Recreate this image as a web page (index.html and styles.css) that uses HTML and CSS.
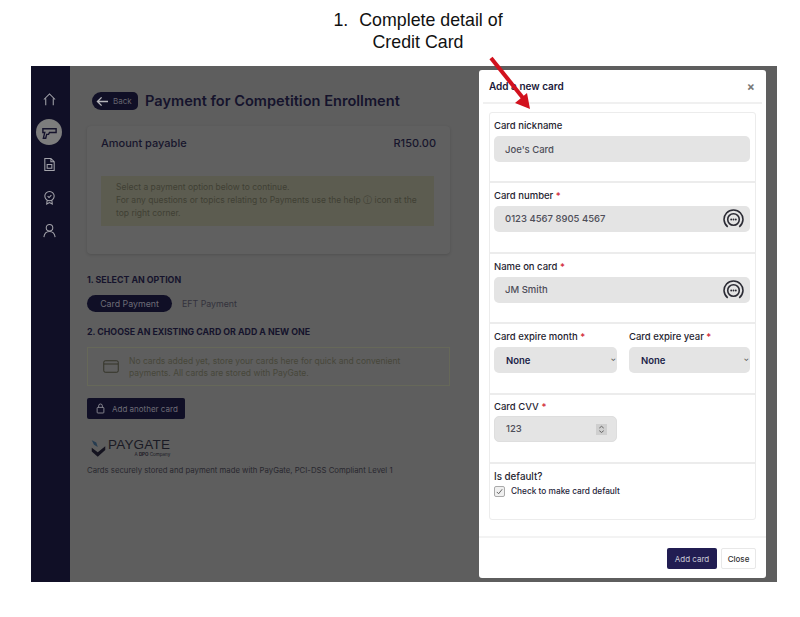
FILE: index.html
```html
<!DOCTYPE html>
<html lang="en">
<head>
  <meta charset="UTF-8" />
  <title>Payment for Competition Enrollment</title>
  <link rel="stylesheet" href="styles.css">
</head>
<body>
  <div class="caption">
    <p><span class="caption-num">1.</span>Complete detail of</p>
    <p>Credit Card</p>
  </div>

  <div class="app">
    <nav class="sidebar">
      <svg class="nav-icon" viewBox="0 0 16 16"><path d="M2 8 8 2l6 6M4 7v7M12 7v7"/></svg>
      <div class="nav-active">
        <svg viewBox="0 0 18 18"><path d="M2 5h14v4H9l-1 2H6l-1 4H2.500l1.500-6H2z"/></svg>
      </div>
      <svg class="nav-icon" viewBox="0 0 16 16"><path d="M3 1.500h6.500L13 5v9.500H3zM9.500 1.500V5H13M5.500 8h5v4h-5z"/></svg>
      <svg class="nav-icon" viewBox="0 0 16 16"><circle cx="8" cy="6.500" r="5"/><path d="m6 6.500 1.500 1.500L10 5.500M5.500 11 5 15l3-1.500 3 1.500-.5-4"/></svg>
      <svg class="nav-icon" viewBox="0 0 16 16"><circle cx="8" cy="5" r="3.500"/><path d="M2 15c.5-4 3-6 6-6s5.500 2 6 6"/></svg>
    </nav>

    <main class="content">
      <div class="page-head">
        <span class="back">
          <svg viewBox="0 0 14 12"><path d="M13 6H2M6 1.500 1.500 6 6 10.500"/></svg>
          Back
        </span>
        <h1>Payment for Competition Enrollment</h1>
      </div>

      <section class="amount-card">
        <div class="amount-row"><span>Amount payable</span><span>R150.00</span></div>
        <div class="notice">
          <p>Select a payment option below to continue.</p>
          <p>For any questions or topics relating to Payments use the help ⓘ icon at the top right corner.</p>
        </div>
      </section>

      <h2 class="step step-one">1. SELECT AN OPTION</h2>
      <div class="options">
        <span class="pill">Card Payment</span>
        <span class="option">EFT Payment</span>
      </div>

      <h2 class="step">2. CHOOSE AN EXISTING CARD OR ADD A NEW ONE</h2>
      <div class="empty-cards">
        <svg viewBox="0 0 16 13"><rect x=".75" y=".75" width="14.500" height="11.500" rx="1.500"/><path d="M1 4h14"/></svg>
        <p>No cards added yet, store your cards here for quick and convenient payments. All cards are stored with PayGate.</p>
      </div>

      <button class="add-another">
        <svg viewBox="0 0 12 14"><rect x="1.500" y="5.500" width="9" height="7.500" rx="1"/><path d="M3.500 5.500V3.500a2.500 2.500 0 0 1 5 0v2"/></svg>
        Add another card
      </button>

      <div class="paygate">
        <svg viewBox="0 0 20 24"><path class="pg-blue" d="M1 1l6 3 2 6-5-3z"/><path class="pg-dark" d="M1 11l8 6L19 9v5L9 23l-8-7z"/></svg>
        <div class="paygate-name">
          <strong>PAYGATE</strong>
          <small>A <b>DPO</b> Company</small>
        </div>
      </div>
      <p class="secure-note">Cards securely stored and payment made with PayGate, PCI-DSS Compliant Level 1</p>
    </main>

    <div class="modal">
      <header class="modal-head">
        <h3>Add a new card</h3>
        <span class="modal-x">×</span>
      </header>

      <form class="card-form">
        <div class="group">
          <label>Card nickname</label>
          <div class="field">Joe's Card</div>
        </div>
        <div class="group group-tall">
          <label>Card number <i>*</i></label>
          <div class="field">0123 4567 8905 4567
            <svg class="autofill" viewBox="0 0 20 20"><path d="M4.500 17a9 9 0 1 1 11 0"/><circle cx="10" cy="10" r="5.500"/><path class="dots" d="M7.800 10h.01M10 10h.01M12.200 10h.01"/></svg>
          </div>
        </div>
        <div class="group">
          <label>Name on card <i>*</i></label>
          <div class="field">JM Smith
            <svg class="autofill" viewBox="0 0 20 20"><path d="M4.500 17a9 9 0 1 1 11 0"/><circle cx="10" cy="10" r="5.500"/><path class="dots" d="M7.800 10h.01M10 10h.01M12.200 10h.01"/></svg>
          </div>
        </div>
        <div class="group group-split">
          <div>
            <label>Card expire month <i>*</i></label>
            <div class="field field-select">None<span class="caret">⌄</span></div>
          </div>
          <div>
            <label>Card expire year <i>*</i></label>
            <div class="field field-select">None<span class="caret">⌄</span></div>
          </div>
        </div>
        <div class="group group-cvv">
          <label>Card CVV <i>*</i></label>
          <div class="field field-cvv">123
            <span class="spinner"><svg viewBox="0 0 8 10"><path d="M1.500 3.500 4 1.500l2.500 2M1.500 6.500 4 8.500l2.500-2"/></svg></span>
          </div>
        </div>
        <div class="group group-default">
          <label>Is default?</label>
          <div class="check-row">
            <span class="checkbox"><svg viewBox="0 0 10 10"><path d="m2 5.500 2 2 4-5"/></svg></span>
            Check to make card default
          </div>
        </div>
      </form>

      <footer class="modal-foot">
        <button type="button" class="btn-add">Add card</button>
        <button type="button" class="btn-close">Close</button>
      </footer>
    </div>

    <svg class="arrow" viewBox="0 0 50 60"><path d="M3 1 35 41"/><path class="arrow-head" d="M27 46 42 52 39 36z"/></svg>
  </div>
</body>
</html>
```

FILE: styles.css
```css
:root{--navy:#100f26;--navy-modal:#211d52;--shade:#5e5e5e;--line:#ececec}
*,*::before,*::after{box-sizing:border-box;margin:0;padding:0}
body{font-family:Inter,"Liberation Sans",sans-serif;background:#fff;color:#222;padding:0 23px 0 31px;height:617px;overflow:hidden}
svg{display:block;fill:none;stroke:currentColor}

/* note above the screenshot */
.caption{height:66px;padding:9px 0 0 28px;text-align:center;font-family:"Liberation Sans",Arial,sans-serif;font-size:17.800px;line-height:22px;color:#111}
.caption-num{margin-right:11px}

.app{position:relative;display:flex;width:746px;height:516px;background:var(--shade);overflow:visible}

.sidebar{width:39px;background:var(--navy);display:flex;flex-direction:column;align-items:center;padding:26px 3px 0 0;color:#a4a4ab}
.nav-icon{width:15px;height:15px;stroke-width:1.100}
.nav-active{width:26px;height:26px;border-radius:50%;background:#7d7d7d;color:#15132c;display:flex;align-items:center;justify-content:center;margin:12px 0 12px}
.nav-active svg{width:17px;height:17px;stroke-width:1.500}
.sidebar .nav-icon:nth-of-type(n+3){margin-top:18px}
.nav-active + .nav-icon{margin-top:0}

.content{width:380px;padding:26px 0 0 17px;color:#15132c}
.page-head{display:flex;align-items:center;gap:7px;height:18px;margin-left:5px}
.back{display:flex;align-items:center;gap:4px;width:46px;height:18px;padding-left:4px;border-radius:9px 5px 5px 9px;background:var(--navy);color:#66656f;font-size:8px}
.back svg{width:13px;height:11px;color:#b5b5ba;stroke-width:1.500}
h1{font-size:14.600px;font-weight:600;white-space:nowrap;color:#15132c}

.amount-card{width:363px;height:128px;margin-top:16px;padding:10px 14px;background:#606060;border-radius:4px;box-shadow:0 1px 3px rgba(0,0,0,.14)}
.amount-row{display:flex;justify-content:space-between;font-size:11px;font-weight:500;line-height:14px;color:#17152c}
.notice{margin-top:26px;height:50px;width:333px;padding:5px 15px 0;background:#5c5c50;font-size:8.500px;line-height:13px;color:#404034}

.step{font-size:8.800px;font-weight:700;line-height:12px;color:#15132c}
.step-one{margin-top:20px}
.options{display:flex;align-items:center;gap:10px;margin:9px 0 14px;font-size:8.800px}
.pill{width:85px;height:17px;line-height:17px;text-align:center;border-radius:9px;background:var(--navy);color:#6d6c76}
.option{color:#33323c}

.empty-cards{display:flex;align-items:center;gap:10px;width:363px;height:39px;margin-top:9px;padding:0 15px;border:1px solid #666859;font-size:8.500px;line-height:12px;color:#47473a}
.empty-cards svg{flex:none;width:16px;height:13px;color:#343428;stroke-width:1}

.add-another{display:flex;align-items:center;gap:7px;width:98px;height:21px;margin-top:12px;padding-left:9px;border:none;border-radius:2px;background:var(--navy);color:#6d6c76;font:inherit;font-size:8px}
.add-another svg{width:9px;height:11px;color:#a5a5ab}

.paygate{display:flex;align-items:center;gap:2px;margin:17px 0 0 4px;height:24px;color:#1a1a24}
.paygate svg{width:15px;height:21px;stroke:none}
.pg-blue{fill:#263c50}
.pg-dark{fill:#14131f}
.paygate-name strong{display:block;font-family:"Liberation Sans",sans-serif;font-size:13.500px;font-weight:400;line-height:14px;letter-spacing:.2px}
.paygate-name small{display:block;text-align:right;font-size:4.500px;line-height:6px}
.secure-note{margin-top:5px;font-size:7.750px;line-height:10px;white-space:nowrap;color:#28272e}

/* dialog lies over the page */
.modal{position:absolute;left:448px;top:4px;width:287px;height:508px;display:flex;flex-direction:column;background:#fff;border-radius:3px;padding:0 10px}
.modal-head{display:flex;justify-content:space-between;align-items:center;height:34px;margin:0 -6px;padding:0 6px;border-bottom:2px solid #f0f0f0;flex:none}
.modal-head h3{font-size:10px;font-weight:600;color:#1a1838}
.modal-x{font-size:12px;font-weight:700;color:#777;margin-right:1px}

.card-form{margin-top:8px;height:408px;border:1px solid var(--line);border-radius:3px;flex:none}
.group{height:70.500px;padding:7px 5px 0 4px;border-bottom:2px solid var(--line)}
.group:first-child{height:69.500px}
.group-tall{height:71px}
label{display:block;font-size:9.500px;font-weight:500;line-height:12px;color:#1f1e30}
label i{color:#d0212f;font-style:normal}
.field{position:relative;display:flex;align-items:center;height:26px;margin-top:4px;padding-left:11px;background:#e4e4e4;border-radius:5px;font-size:9.500px;font-weight:500;color:#4e4e58}
.autofill{position:absolute;right:6px;top:3px;width:21px;height:21px;color:#2a2a33;stroke-width:1.500}
.dots{stroke-width:1.800;stroke-linecap:round}

.group-split{display:grid;grid-template-columns:123px 121px;column-gap:12px}
.field-select{padding-left:12px;font-weight:600;color:#211f48}
.caret{position:absolute;right:1px;top:7px;font-size:7px;color:#555}
.group-cvv{height:69px;padding-top:6px}
.group-cvv .field{margin-top:3px}
.field-cvv{width:123px;border:1px solid #dedede}
.spinner{position:absolute;right:9px;top:7px;width:11px;height:11px;padding:1px 2px;background:#cfcfcf;color:#555}
.group-default{border-bottom:none;height:56px;padding-top:6px}
.group-default label{font-size:9.800px;line-height:13px}
.check-row{display:flex;align-items:center;gap:6px;margin-top:3px;font-size:8.300px;font-weight:500;color:#26253a}
.checkbox{width:11px;height:11px;border:1px solid #aaa;border-radius:2px;background:#f0f0f0;color:#555}

.modal-foot{display:flex;justify-content:flex-end;gap:4px;align-items:flex-start;margin:16px -10px 0;padding:10px 10px 0;border-top:2px solid #f3f3f3}
.modal-foot button{height:21px;border-radius:2px;font-family:inherit;font-size:8px}
.btn-add{width:50px;border:none;background:var(--navy-modal);color:#c9c8d6}
.btn-close{width:35px;border:1px solid #e8e8e8;background:#fff;color:#333;font-weight:500}

/* red annotation arrow over the dialog */
.arrow{position:absolute;left:457px;top:-9px;width:50px;height:60px;color:#d2121e;stroke-width:4;overflow:visible}
.arrow-head{fill:#d2121e;stroke:none}
```
